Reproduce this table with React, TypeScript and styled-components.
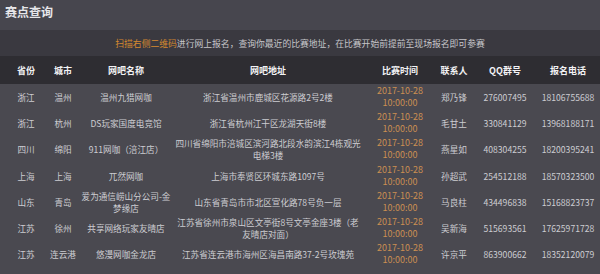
import React from 'react';
import styled, { createGlobalStyle } from 'styled-components';

const GlobalStyle = createGlobalStyle`
  html, body {
    margin: 0;
    padding: 0;
    background: #4a4950;
  }
  body {
    font-family: "Noto Sans CJK SC", "Noto Sans", sans-serif;
  }
`;

const Page = styled.div`
  width: 600px;
  height: 274px;
  overflow: hidden;
  background: #4a4950;
  color: #cdcdd2;
`;

const TitleBar = styled.div`
  height: 30px;
  box-sizing: border-box;
  padding: 4px 5px 0;
  background: #47464e;
  color: #e6e6ea;
  font-size: 12px;
  line-height: 16px;
  font-weight: 700;
`;

const Notice = styled.div`
  height: 26px;
  display: flex;
  align-items: center;
  justify-content: center;
  background: #3a3940;
  font-size: 8.8px;
  color: #c6c6ca;
`;

const Highlight = styled.span`
  color: #d5892f;
`;

const cols = '44px 30px 96px 188px 76px 32px 70px 56px';

const HeaderRow = styled.div`
  display: grid;
  grid-template-columns: ${cols};
  align-items: center;
  height: 28px;
  padding-left: 4px;
  background: #2e2d32;
  color: #f2f2f4;
  font-size: 9px;
  font-weight: 700;
`;

const Row = styled.div`
  display: grid;
  grid-template-columns: ${cols};
  align-items: center;
  height: 26.2px;
  padding-left: 4px;
  font-size: 8.6px;
  line-height: 12px;
`;

const Cell = styled.div<{ $accent?: boolean }>`
  text-align: center;
  white-space: normal;
  word-break: break-all;
  color: ${({ $accent }) => ($accent ? '#cc8f52' : 'inherit')};
  font-size: ${({ $accent }) => ($accent ? '9px' : 'inherit')};
`;

const NumCell = styled(Cell)`
  white-space: nowrap;
`;

const headers = ['省份', '城市', '网吧名称', '网吧地址', '比赛时间', '联系人', 'QQ群号', '报名电话'];

const venues = [
  ['浙江', '温州', '温州九猎网咖', '浙江省温州市鹿城区花源路2号2楼', '郑乃锋', '276007495', '18106755688'],
  ['浙江', '杭州', 'DS玩家国度电竞馆', '浙江省杭州江干区龙湖天街8楼', '毛甘土', '330841129', '13968188171'],
  ['四川', '绵阳', '911网咖（涪江店）', '四川省绵阳市涪城区滨河路北段水韵滨江4栋观光电梯3楼', '燕星如', '408304255', '18200395241'],
  ['上海', '上海', '兀然网咖', '上海市奉贤区环城东路1097号', '孙超武', '254512188', '18570323500'],
  ['山东', '青岛', '爱为通信崂山分公司-金梦缘店', '山东省青岛市市北区宣化路78号负一层', '马良柱', '434496838', '15168823737'],
  ['江苏', '徐州', '共享网络玩家友晴店', '江苏省徐州市泉山区文亭街8号文亭金座3楼（老友晴店对面）', '吴新海', '515693561', '17625971728'],
  ['江苏', '连云港', '悠漫网咖金龙店', '江苏省连云港市海州区海昌南路37-2号玫瑰苑', '许京平', '863900662', '18352120079'],
];

export default function App() {
  return (
    <Page>
      <GlobalStyle />
      <TitleBar>赛点查询</TitleBar>
      <Notice>
        <Highlight>扫描右侧二维码</Highlight>进行网上报名，查询你最近的比赛地址，在比赛开始前提前至现场报名即可参赛
      </Notice>
      <HeaderRow>
        {headers.map((h) => (
          <Cell key={h}>{h}</Cell>
        ))}
      </HeaderRow>
      {venues.map(([province, city, name, address, contact, qq, phone]) => (
        <Row key={qq}>
          <Cell>{province}</Cell>
          <Cell>{city}</Cell>
          <Cell>{name}</Cell>
          <Cell>{address}</Cell>
          <Cell $accent>
            2017-10-28
            <br />
            10:00:00
          </Cell>
          <NumCell>{contact}</NumCell>
          <NumCell>{qq}</NumCell>
          <NumCell>{phone}</NumCell>
        </Row>
      ))}
    </Page>
  );
}
